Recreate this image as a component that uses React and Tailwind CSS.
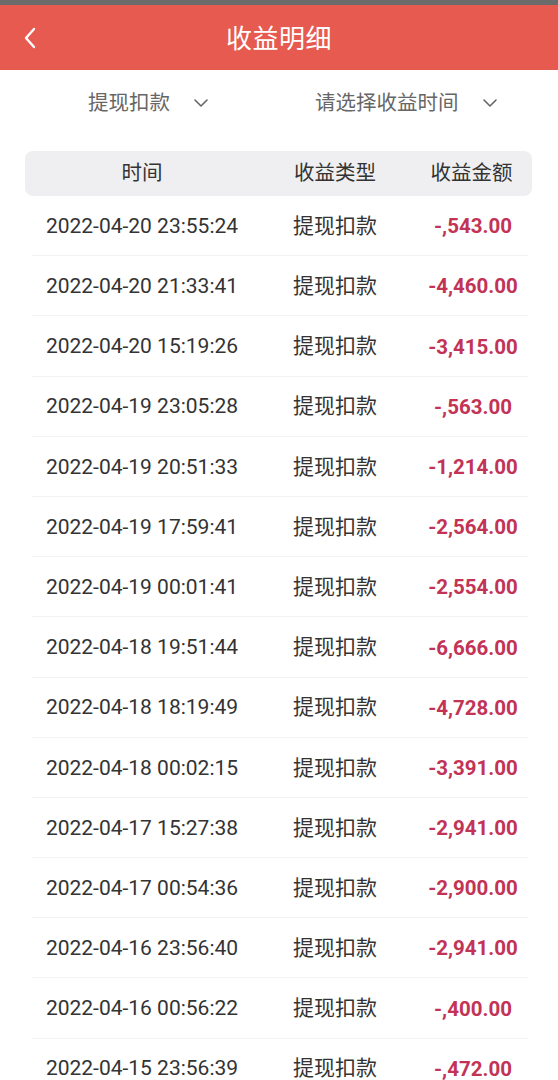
import React from 'react';

const rows = [
  ['2022-04-20 23:55:24', '-,543.00'],
  ['2022-04-20 21:33:41', '-4,460.00'],
  ['2022-04-20 15:19:26', '-3,415.00'],
  ['2022-04-19 23:05:28', '-,563.00'],
  ['2022-04-19 20:51:33', '-1,214.00'],
  ['2022-04-19 17:59:41', '-2,564.00'],
  ['2022-04-19 00:01:41', '-2,554.00'],
  ['2022-04-18 19:51:44', '-6,666.00'],
  ['2022-04-18 18:19:49', '-4,728.00'],
  ['2022-04-18 00:02:15', '-3,391.00'],
  ['2022-04-17 15:27:38', '-2,941.00'],
  ['2022-04-17 00:54:36', '-2,900.00'],
  ['2022-04-16 23:56:40', '-2,941.00'],
  ['2022-04-16 00:56:22', '-,400.00'],
  ['2022-04-15 23:56:39', '-,472.00'],
];

const Chevron = () => (
  <svg width="18" height="12" viewBox="0 0 18 12" fill="none" stroke="#666" strokeWidth="1.6" strokeLinecap="round" strokeLinejoin="round">
    <path d="M3 3l6 6 6-6" />
  </svg>
);

const App = () => {
  return (
    <div
      className="w-[558px] h-[1080px] overflow-hidden bg-white"
      style={{ fontFamily: 'Roboto, "Noto Sans CJK SC", sans-serif' }}
    >
      {/* 状态栏底边 */}
      <div className="h-[5px] bg-[#6b6b6b]" />

      {/* 标题栏 */}
      <header className="relative h-[65px] bg-[#e65a50] flex items-center justify-center">
        <svg className="absolute left-[22px] top-[21px]" width="16" height="24" viewBox="0 0 16 24" fill="none" stroke="#fff" strokeWidth="2.4" strokeLinecap="round" strokeLinejoin="round">
          <path d="M12 3L4 12l8 9" />
        </svg>
        <h1 className="text-white text-[26px] tracking-[0.5px] pt-[4px]">收益明细</h1>
      </header>

      {/* 筛选 */}
      <div className="h-[64px] flex items-center text-[20.5px] text-[#666] pt-[2px]">
        <div className="flex items-center ml-[88px] gap-[22px]">
          <span>提现扣款</span>
          <Chevron />
        </div>
        <div className="flex items-center ml-[105px] gap-[22px]">
          <span>请选择收益时间</span>
          <Chevron />
        </div>
      </div>

      {/* 表格 */}
      <div className="ml-[25px] w-[507px] mt-[17px]">
        <div className="grid grid-cols-[234px_152px_121px] h-[45px] items-center bg-[#efeff1] rounded-[8px] text-[20.5px] text-[#333] text-center">
          <span>时间</span>
          <span>收益类型</span>
          <span>收益金额</span>
        </div>
        {rows.map(([time, amount]) => (
          <div
            key={time}
            className="ml-[7px] w-[496px] grid grid-cols-[220px_166px_110px] h-[60.2px] items-center text-center border-b border-[#f2f2f2] pt-[2px]"
          >
            <span className="text-[21px] text-[#333]">{time}</span>
            <span className="text-[21px] text-[#333]">提现扣款</span>
            <span className="text-[20.5px] font-bold text-[#c23356]">{amount}</span>
          </div>
        ))}
      </div>
    </div>
  );
};

export default App;
